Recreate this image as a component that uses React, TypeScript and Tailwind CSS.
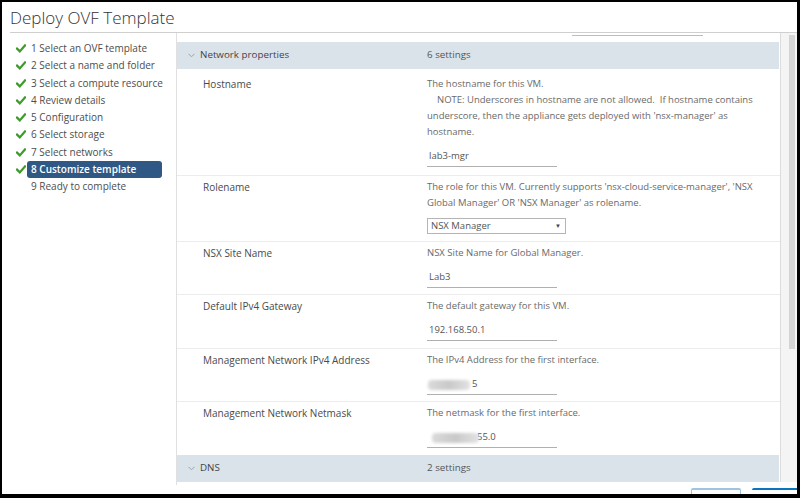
import React from 'react'

const font = { fontFamily: '"Open Sans", "Liberation Sans", sans-serif' }

const steps = [
  '1 Select an OVF template',
  '2 Select a name and folder',
  '3 Select a compute resource',
  '4 Review details',
  '5 Configuration',
  '6 Select storage',
  '7 Select networks',
  '8 Customize template',
  '9 Ready to complete',
]

function Check() {
  return (
    <svg width="10" height="9" viewBox="0 0 10 9" fill="none">
      <path d="M1 4.6 L3.8 7.4 L9 1.4" stroke="#3f9a2c" strokeWidth="2.2" strokeLinecap="square" />
    </svg>
  )
}

function Chevron() {
  return (
    <svg width="7" height="5" viewBox="0 0 7 5" fill="none">
      <path d="M0.5 0.8 L3.5 3.8 L6.5 0.8" stroke="#9aa3ab" strokeWidth="1" />
    </svg>
  )
}

function GroupHeader({ title, count }: { title: string; count: string }) {
  return (
    <div className="grid grid-cols-[250px_1fr] h-[27px] items-center bg-[#dbe3ea] mr-[1px]">
      <div className="flex items-center pl-[11px] gap-[5px] text-[9.8px] font-medium text-[#444]">
        <Chevron />
        <span>{title}</span>
      </div>
      <div className="text-[9.8px] text-[#555]">{count}</div>
    </div>
  )
}

function TextInput({ value, blur }: { value: string; blur?: 'a' | 'b' }) {
  return (
    <div className="relative mt-[7px] w-[130px] h-[20px] border-b border-[#b0b0b0] flex items-center pl-[2px] text-[9.5px] text-[#555]">
      {blur === 'a' && (
        <>
          <span className="inline-block w-[43px]" />
          <span>5</span>
          <span className="absolute left-[1px] top-[5px] w-[42px] h-[10px] bg-gradient-to-r from-[#dadada] via-[#c9c9c9] to-[#e2e2e2] blur-[1.5px] rounded-sm" />
        </>
      )}
      {blur === 'b' && (
        <>
          <span className="inline-block w-[48px]" />
          <span>55.0</span>
          <span className="absolute left-[5px] top-[5px] w-[47px] h-[10px] bg-gradient-to-r from-[#dadada] via-[#c9c9c9] to-[#e2e2e2] blur-[1.5px] rounded-sm" />
        </>
      )}
      {!blur && <span>{value}</span>}
    </div>
  )
}

function Row({
  label,
  lines,
  children,
  first,
}: {
  label: string
  lines: React.ReactNode[]
  children: React.ReactNode
  first?: boolean
}) {
  return (
    <div
      className={
        first
          ? 'grid grid-cols-[250px_1fr] pt-[7px] pb-[8px]'
          : 'grid grid-cols-[250px_1fr] pt-[3px] pb-[6.5px] border-t border-[#ececec]'
      }
    >
      <div className="pl-[26px] text-[10px] leading-[16px] text-[#4a4a4a]">{label}</div>
      <div>
        <div className="text-[9.5px] leading-[16px] text-[#6a6a6a] whitespace-nowrap">
          {lines.map((l, i) => (
            <div key={i}>{l}</div>
          ))}
        </div>
        {children}
      </div>
    </div>
  )
}

export default function App() {
  return (
    <div className="w-[800px] h-[498px] bg-black pt-[2px] pl-[2px] pr-[3px] pb-[4px]" style={font}>
      <div className="h-full bg-white flex flex-col overflow-hidden">
        {/* Title */}
        <div className="h-[30px] pl-[8px] pt-[1px] flex items-center">
          <h1 className="text-[17px] font-light text-[#333]">Deploy OVF Template</h1>
        </div>
        <div className="ml-[8px] h-[1px] bg-[#cfcfcf]" />

        <div className="flex flex-1 min-h-0">
          {/* Steps */}
          <nav className="w-[175px] shrink-0 border-r border-[#e0e0e0] pt-[7px] pl-[14px] h-[452px]">
            {steps.map((s, i) => {
              const active = i === 7
              const done = i < 8
              return (
                <div key={s} className="flex items-center h-[17.25px]">
                  <div className="w-[11px] flex items-center">{done && <Check />}</div>
                  <div
                    className={
                      active
                        ? 'w-[135px] h-[17px] rounded-[3px] bg-[#2f5884] text-white font-semibold pl-[4px] flex items-center text-[10px]'
                        : 'pl-[4px] text-[10px] font-medium text-[#4d4d4d]'
                    }
                  >
                    {s}
                  </div>
                </div>
              )
            })}
          </nav>

          {/* Content */}
          <div className="flex-1 flex flex-col min-w-0">
            <div className="flex h-[452px]">
              <div className="flex-1 min-w-0 overflow-hidden">
                <div className="h-[9px] pt-[2px]">
                  <div className="ml-[395px] w-[131px] h-[1px] bg-[#bdbdbd]" />
                </div>
                <GroupHeader title="Network properties" count="6 settings" />
                <Row
                  first
                  label="Hostname"
                  lines={[
                    'The hostname for this VM.',
                    <span className="pl-[10px]">NOTE: Underscores in hostname are not allowed.&nbsp; If hostname contains</span>,
                    "underscore, then the appliance gets deployed with 'nsx-manager' as",
                    'hostname.',
                  ]}
                >
                  <TextInput value="lab3-mgr" />
                </Row>
                <Row
                  label="Rolename"
                  lines={[
                    "The role for this VM. Currently supports 'nsx-cloud-service-manager', 'NSX",
                    "Global Manager' OR 'NSX Manager' as rolename.",
                  ]}
                >
                  <div className="mt-[7px] w-[139px] h-[16px] border border-[#b5b5b5] flex items-center justify-between pl-[3px] pr-[4px] text-[9.5px] text-[#555]">
                    <span>NSX Manager</span>
                    <span className="text-[6px] text-[#444]">▼</span>
                  </div>
                </Row>
                <Row label="NSX Site Name" lines={['NSX Site Name for Global Manager.']}>
                  <TextInput value="Lab3" />
                </Row>
                <Row label="Default IPv4 Gateway" lines={['The default gateway for this VM.']}>
                  <TextInput value="192.168.50.1" />
                </Row>
                <Row label="Management Network IPv4 Address" lines={['The IPv4 Address for the first interface.']}>
                  <TextInput value="" blur="a" />
                </Row>
                <Row label="Management Network Netmask" lines={['The netmask for the first interface.']}>
                  <TextInput value="" blur="b" />
                </Row>
                <GroupHeader title="DNS" count="2 settings" />
              </div>

              {/* Scrollbar */}
              <div className="w-[17px] shrink-0 border-l border-[#dcdcdc] bg-[#f4f4f4] pt-[2px] pl-[8px]">
                <div className="w-[6px] h-[314px] bg-[#d4d4d4]" />
              </div>
            </div>

            {/* Footer buttons (cut off) */}
            <div className="flex justify-end gap-[11px] pt-[6px]">
              <div className="w-[50px] h-[6px] border-t-2 border-x border-[#9fc3e2] rounded-t-[2px]" />
              <div className="w-[45px] h-[6px] border-t-2 border-[#0a74c0] rounded-tl-[2px]" />
            </div>
          </div>
        </div>
      </div>
    </div>
  )
}
